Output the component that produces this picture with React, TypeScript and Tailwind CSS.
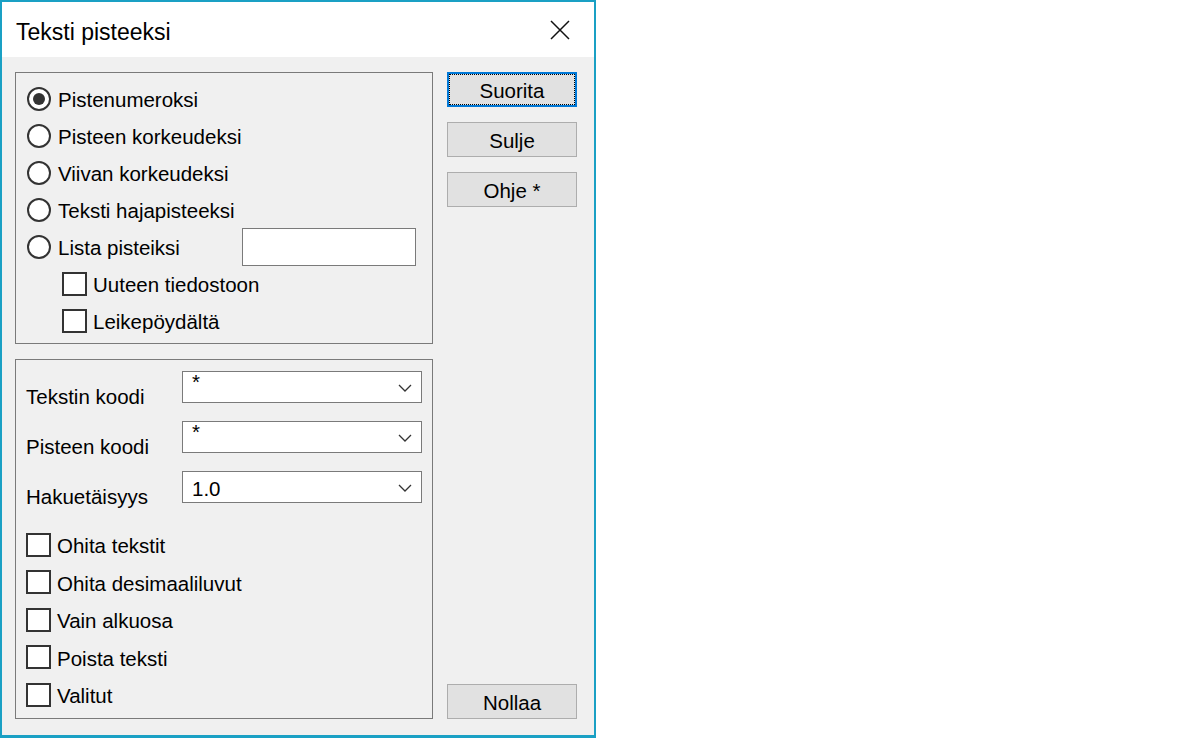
import React from 'react'

const font = { fontFamily: '"Liberation Sans", Arial, sans-serif' }

function Radio({ checked, label }: { checked?: boolean; label: string }) {
  return (
    <div className="flex items-center gap-[7px]">
      <span className="w-[24px] h-[24px] rounded-full border-2 border-[#333333] bg-white flex items-center justify-center shrink-0">
        {checked && <span className="w-[12px] h-[12px] rounded-full bg-[#333333]" />}
      </span>
      <span className="pt-[2px] text-[20.5px] leading-[23px] text-black">{label}</span>
    </div>
  )
}

function Check({ label }: { label: string }) {
  return (
    <div className="flex items-center gap-[6px]">
      <span className="w-[25px] h-[24px] border-2 border-[#333333] bg-white shrink-0" />
      <span className="pt-[2px] text-[20.5px] leading-[23px] text-black">{label}</span>
    </div>
  )
}

function Combo({ label, value, small }: { label: string; value: string; small?: boolean }) {
  return (
    <div className="flex items-start h-[32px]">
      <span className="w-[156px] mt-[14px] text-[20.5px] leading-[23px] text-black">{label}</span>
      <div className="w-[240px] h-[32px] border border-[#7a7a7a] bg-white flex items-start justify-between pl-[9px] pr-[9px]">
        <span className={`text-[20.5px] leading-[23px] text-black ${small ? '-mt-[2px]' : 'mt-[5px]'}`}>{value}</span>
        <svg width="14" height="8" viewBox="0 0 14 8" className="mt-[12px]">
          <path d="M1 1 L7 7 L13 1" fill="none" stroke="#333333" strokeWidth="1.3" />
        </svg>
      </div>
    </div>
  )
}

function Btn({ label, focused }: { label: string; focused?: boolean }) {
  if (focused) {
    return (
      <button className="relative w-[130px] h-[35px] pt-[2px] bg-[#e1e1e1] border-2 border-[#0078d7] text-[20.5px] leading-[23px] text-black">
        <span className="absolute inset-0 border border-dotted border-black" />
        {label}
      </button>
    )
  }
  return (
    <button className="w-[130px] h-[35px] pt-[2px] bg-[#e1e1e1] border border-[#adadad] text-[20.5px] leading-[23px] text-black">
      {label}
    </button>
  )
}

export default function App() {
  return (
    <div className="w-[1200px] h-[738px] bg-white flex" style={font}>
      <div className="w-[596px] h-[738px] border-2 border-b-[3px] border-[#1aa0c4] flex flex-col">
        {/* title bar */}
        <div className="h-[55px] bg-white flex items-start justify-between">
          <span className="ml-[14px] mt-[19px] text-[23px] leading-[23px] text-black">Teksti pisteeksi</span>
          <svg width="20" height="20" viewBox="0 0 20 20" className="mt-[18px] mr-[24px]">
            <path d="M1 1 L19 19 M19 1 L1 19" fill="none" stroke="#111111" strokeWidth="1.5" />
          </svg>
        </div>

        <div className="flex-1 bg-[#f0f0f0] flex gap-[14px] pl-[13px] pr-[17px] pt-[15px] pb-[16px]">
          <div className="flex flex-col gap-[15px] w-[418px]">
            {/* group 1 */}
            <div className="h-[272px] border border-[#7a7a7a] pl-[11px] pr-[16px] pt-[7px] flex flex-col">
              <div className="h-[37px] flex items-center"><Radio checked label="Pistenumeroksi" /></div>
              <div className="h-[37px] flex items-center"><Radio label="Pisteen korkeudeksi" /></div>
              <div className="h-[37px] flex items-center"><Radio label="Viivan korkeudeksi" /></div>
              <div className="h-[37px] flex items-center"><Radio label="Teksti hajapisteeksi" /></div>
              <div className="h-[37px] flex items-center justify-between">
                <Radio label="Lista pisteiksi" />
                <div className="w-[174px] h-[38px] border border-[#7a7a7a] bg-white" />
              </div>
              <div className="h-[37px] flex items-center pl-[35px]"><Check label="Uuteen tiedostoon" /></div>
              <div className="h-[37px] flex items-center pl-[35px]"><Check label="Leikepöydältä" /></div>
            </div>

            {/* group 2 */}
            <div className="flex-1 border border-[#7a7a7a] pl-[10px] pt-[11px] flex flex-col">
              <div className="flex flex-col gap-[18px]">
                <Combo label="Tekstin koodi" value="*" small />
                <Combo label="Pisteen koodi" value="*" small />
                <Combo label="Hakuetäisyys" value="1.0" />
              </div>
              <div className="mt-[23px] flex flex-col">
                <div className="h-[37.5px] flex items-center"><Check label="Ohita tekstit" /></div>
                <div className="h-[37.5px] flex items-center"><Check label="Ohita desimaaliluvut" /></div>
                <div className="h-[37.5px] flex items-center"><Check label="Vain alkuosa" /></div>
                <div className="h-[37.5px] flex items-center"><Check label="Poista teksti" /></div>
                <div className="h-[37.5px] flex items-center"><Check label="Valitut" /></div>
              </div>
            </div>
          </div>

          {/* buttons */}
          <div className="w-[130px] flex flex-col gap-[15px]">
            <Btn label="Suorita" focused />
            <Btn label="Sulje" />
            <Btn label="Ohje *" />
            <div className="mt-auto">
              <Btn label="Nollaa" />
            </div>
          </div>
        </div>
      </div>
    </div>
  )
}
